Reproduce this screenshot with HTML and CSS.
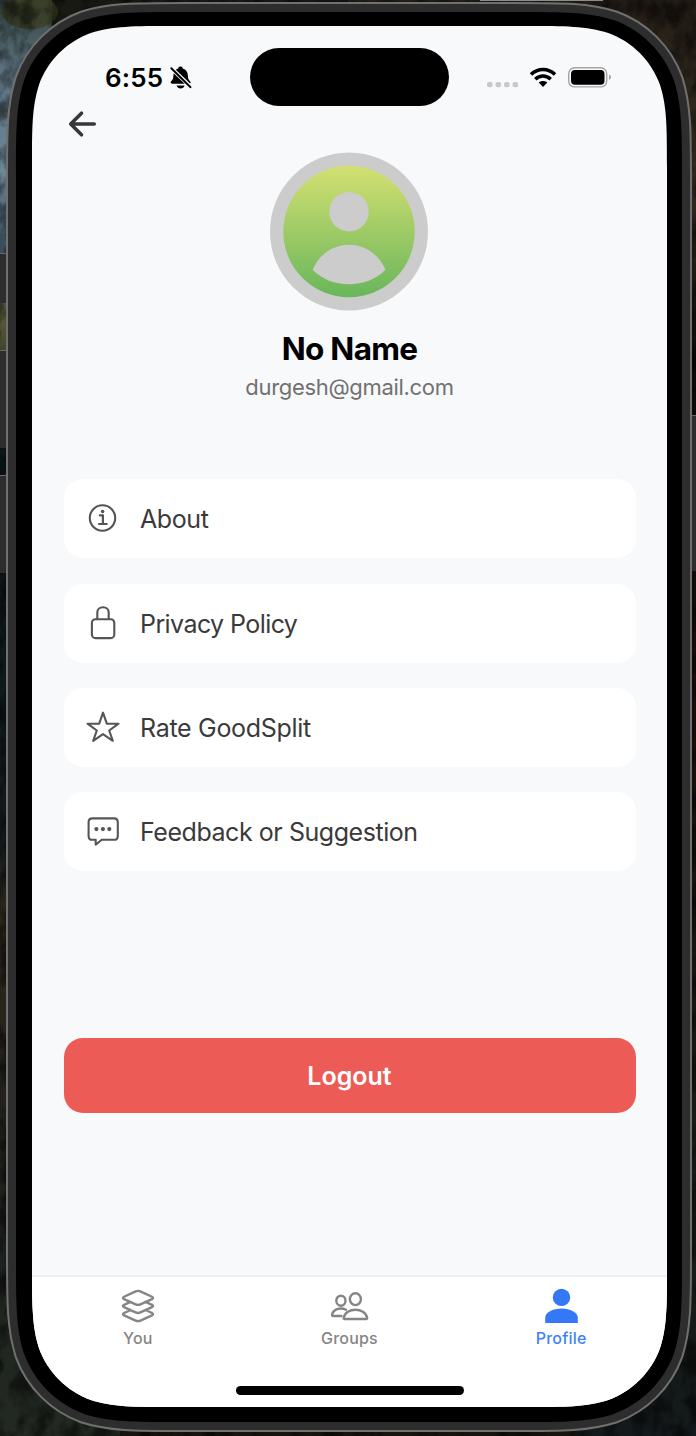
FILE: index.html
```html
<!DOCTYPE html>
<html lang="en">
<head>
<meta charset="utf-8">
<title>Profile</title>
<link rel="stylesheet" href="styles.css">
</head>
<body>
<svg class="device" viewBox="0 0 696 1436" aria-hidden="true">
  <defs>
    <linearGradient id="left" x1="0" y1="0" x2="0" y2="1">
      <stop offset="0" stop-color="#34443f"/><stop offset=".05" stop-color="#5c7280"/><stop offset=".12" stop-color="#6d8797"/><stop offset=".17" stop-color="#3f5361"/><stop offset=".22" stop-color="#5a5a39"/><stop offset=".3" stop-color="#0c1718"/><stop offset=".58" stop-color="#11191c"/><stop offset=".64" stop-color="#2d281e"/><stop offset=".75" stop-color="#25221b"/><stop offset=".86" stop-color="#1d211e"/><stop offset="1" stop-color="#232a22"/>
    </linearGradient>
    <linearGradient id="right" x1="0" y1="0" x2="0" y2="1">
      <stop offset="0" stop-color="#251e18"/><stop offset=".12" stop-color="#352d20"/><stop offset=".25" stop-color="#0c0b09"/><stop offset=".5" stop-color="#170e09"/><stop offset=".85" stop-color="#181d17"/><stop offset="1" stop-color="#14191b"/>
    </linearGradient>
    <filter id="grain" x="0" y="0" width="100%" height="100%">
      <feTurbulence type="fractalNoise" baseFrequency=".06 .04" numOctaves="4" seed="8"/>
      <feColorMatrix values="0 0 0 0 0  0 0 0 0 0  0 0 0 0 0  3 0 0 0 -1.2"/>
    </filter>
  </defs>
  <rect width="348" height="1436" fill="url(#left)"/>
  <rect x="348" width="348" height="1436" fill="url(#right)"/>
  <rect x="52" width="296" height="60" fill="#181913"/>
  <ellipse cx="30" cy="12" rx="28" ry="17" fill="#3b3d20" opacity=".75"/>
  <rect y="1428" x="120" width="456" height="8" fill="#17140f"/>
  <rect width="696" height="1436" filter="url(#grain)" opacity=".5"/>
  <rect x="480" y="0" width="123" height="1" fill="#8b8b88"/>
  <path fill="#2d2d2d" d="M0 253h8v50H0zM0 350h8v98H0zM0 475h8v98H0zM690 415h6v156h-6z"/>
  <path stroke="#6a6a6a" d="M0 253.5h7M0 350.5h7M0 475.5h7M691 415.500h5"/>
  <path fill="#2d2d2d" stroke="#707070" stroke-width="2" d="M185.9 3H512.1c51.5 0 77.300 0 105 8.800c30.300 11 54.100 34.800 65.100 65.100c8.800 27.700 8.800 53.500 8.800 105V1252.100c0 51.500 0 77.300-8.800 105c-11 30.300-34.800 54.100-65.100 65.100c-27.700 8.800-53.500 8.800-105 8.800H185.900c-51.500 0-77.300 0-105-8.800c-30.300-11-54.100-34.800-65.100-65.100c-8.800-27.700-8.800-53.500-8.800-105V181.900c0-51.500 0-77.300 8.800-105c11-30.300 34.800-54.100 65.100-65.100c27.700-8.800 53.500-8.800 105-8.800z"/>
  <path d="M181.100 12H516.900c47.500 0 71.300 0 96.900 8.100c27.900 10.200 49.900 32.200 60.100 60.100c8.100 25.600 8.100 49.400 8.100 96.900V1256.900c0 47.500 0 71.300-8.100 96.900c-10.200 27.900-32.200 49.900-60.100 60.100c-25.600 8.100-49.400 8.100-96.900 8.100H181.100c-47.500 0-71.300 0-96.900-8.100c-27.900-10.200-49.900-32.200-60.100-60.100c-8.100-25.600-8.100-49.400-8.100-96.900V177.100c0-47.500 0-71.300 8.100-96.900c10.200-27.900 32.200-49.900 60.100-60.100c25.600-8.100 49.400-8.100 96.900-8.100z"/>
</svg>

<div class="screen">
  <header class="status">
    <div class="status-left">
      <span class="time">6:55</span>
      <svg class="bell" width="22" height="24" viewBox="170 66 22 24">
        <path d="M172.300 83.800c-2.200-.3-2-1.700-.9-2.700c2.200-1.900 1.800-4.100 2.200-7.100c.5-3.200 2.300-5 4.600-5.600c.4-2.400 4.200-2.400 4.600 0c3.200.8 4.900 3.300 5.100 7c.1 3 .6 4.200 2.200 5.900c1.100 1.200.6 2.500-1 2.500zM176.600 85.500h8c-.8 4-7.200 4-8 0z"/>
        <path stroke="#f8f9fb" stroke-width="4" d="m170.500 67.500 21 20"/>
        <path stroke="#000" stroke-width="1.900" stroke-linecap="round" d="m171.300 68.200 19.200 19"/>
      </svg>
    </div>
    <div class="island"></div>
    <svg class="signals" width="126" height="24" viewBox="486 65 126 24">
      <g fill="#c8c9cb"><rect x="487" y="82" width="5.600" height="5.300" rx="2"/><rect x="495.500" y="82" width="5.600" height="5.300" rx="2"/><rect x="504" y="82" width="5.600" height="5.300" rx="2"/><rect x="512.500" y="82" width="5.600" height="5.300" rx="2"/></g>
      <g fill="none" stroke="#000" stroke-width="3.600"><path d="M531 74.500c6.800-6.700 17.200-6.700 24 0"/><path d="M535.300 79.200c4.500-4.300 10.900-4.300 15.400 0"/></g>
      <path d="m543 87-4.300-4.400c2.500-2 6.100-2 8.600 0z"/>
      <rect x="568.700" y="67.700" width="38" height="19.200" rx="6" fill="none" stroke="#a4a5a7" stroke-width="1.400"/>
      <rect x="571" y="70" width="33.500" height="14.700" rx="4"/><path fill="#a4a5a7" d="M609 74.500q2 .8 2 2.700t-2 2.700z"/>
    </svg>
  </header>

  <main class="content">
    <svg class="back" width="30" height="28" viewBox="68 110 30 28"><path d="M81.500 113.200 70.700 124l10.800 10.800M71.500 124h22.800"/></svg>
    <section class="identity">
      <svg class="avatar" width="159" height="159" viewBox="0 -.5 159 159">
        <defs><linearGradient id="lime" x1="0" y1="0" x2="0" y2="1"><stop stop-color="#d4e071"/><stop offset="1" stop-color="#69b65b"/></linearGradient></defs>
        <circle cx="79" cy="79" r="79" fill="#ccc"/><circle cx="79" cy="79" r="65.700" fill="url(#lime)"/>
        <circle cx="79" cy="59.300" r="19.700" fill="#ccc"/><path fill="#ccc" d="M42.700 117.300C49 102 63 92.200 79 92.200s30 9.800 36.500 25.100C106 127 93 131.800 79 131.800s-27-4.800-36.300-14.500z"/>
      </svg>
      <h1>No Name</h1>
      <p>durgesh@gmail.com</p>
    </section>
    <nav class="menu">
      <a class="item about"><svg viewBox="86 502 34 34"><circle cx="102.500" cy="518" r="12.700"/><path stroke-width="2.200" d="M99.900 515.300h3v8.400M99 524h7.700"/><circle cx="102.600" cy="511.500" r="1.800" class="dot"/></svg><span>About</span></a>
      <a class="item privacy"><svg viewBox="86 607 34 34"><path d="M97.300 620v-6.300c0-7.200 11.400-7.200 11.400 0v6.300"/><rect x="91.900" y="620.200" width="22.400" height="18.900" rx="3.600"/></svg><span>Privacy Policy</span></a>
      <a class="item rate"><svg viewBox="86 711 34 34"><path d="m103 713.700 3.800 11h11.700l-9.300 6.800 3.600 10.300-9.800-6.700-9.800 6.700 3.600-10.300-9.300-6.800h11.700z"/></svg><span>Rate GoodSplit</span></a>
      <a class="item feedback"><svg viewBox="86 815 34 34"><path d="M92.300 818.400h21.600q3.900 0 3.900 3.900v13.600q0 3.900-3.900 3.900h-12.200l-6 4.900v-4.900h-3.400q-3.700 0-3.700-3.900v-13.600q0-3.900 3.700-3.900z"/><g class="dot"><circle cx="96.400" cy="829.100" r="2.100"/><circle cx="102.900" cy="829.100" r="2.100"/><circle cx="109.300" cy="829.100" r="2.100"/></g></svg><span>Feedback or Suggestion</span></a>
    </nav>
    <button class="logout"><span>Logout</span></button>
  </main>

  <footer class="tabs">
    <a class="tab"><svg width="40" height="40" viewBox="0 0 512 512"><g fill="none" stroke="#858585" stroke-width="31" stroke-linecap="round" stroke-linejoin="round"><path d="M434.800 137.650l-149.360-68.100c-16.190-7.400-42.690-7.400-58.880 0L77.300 137.650c-17.600 8-17.600 21.090 0 29.090l148 67.500c16.890 7.700 44.690 7.700 61.580 0l148-67.500c17.520-8 17.520-21.100-.08-29.090z"/><path d="M160 308.520l-82.700 37.110c-17.600 8-17.600 21.100 0 29.100l148 67.500c16.890 7.690 44.690 7.690 61.580 0l148-67.500c17.600-8 17.600-21.100 0-29.100l-79.940-38.470M160 204.480l-82.800 37.160c-17.600 8-17.600 21.100 0 29.100l148 67.490c16.890 7.700 44.690 7.700 61.580 0l148-67.490c17.700-8 17.700-21.100.1-29.100L352 204.480"/></g></svg><span>You</span></a>
    <a class="tab"><svg width="40" height="40" viewBox="329.500 1286 40 40"><g fill="none" stroke="#858585" stroke-width="2.400" stroke-linejoin="round" stroke-linecap="round"><ellipse cx="341.400" cy="1300.700" rx="4.600" ry="5"/><ellipse cx="355.900" cy="1299.200" rx="5.500" ry="5.900"/><path d="M346.500 1309.800c-5.800-3.100-13-.1-13.900 5q-.2 1.200 1 1.200h8.200M345 1319q-1 0-.8-1.200c2-10.700 21.400-10.700 23.400 0q.2 1.200-.8 1.200z"/></g></svg><span>Groups</span></a>
    <a class="tab active"><svg width="40" height="40" viewBox="541 1286 40 40"><g fill="#3478f6"><circle cx="561.500" cy="1297.400" r="8.700"/><path d="M545.200 1323v-5.500c0-4.800 7.500-8.900 16.300-8.900s16.300 4.100 16.300 8.900v5.500z"/></g></svg><span>Profile</span></a>
  </footer>
  <div class="home"></div>
</div>
</body>
</html>
```
FILE: styles.css
```css
* { box-sizing: border-box; }
body { margin: 0; width: 696px; height: 1436px; position: relative; overflow: hidden; background: #15191a; font-family: Inter, "Liberation Sans", sans-serif; }
svg { display: block; flex: none; }
.device { position: absolute; inset: 0; width: 696px; height: 1436px; }
.screen {
  position: relative; width: 635px; height: 1381px; margin: 26px 0 0 32px; display: flex; flex-direction: column; background: #f8f9fb; float: left;
  clip-path: path("M142.2 0H492.8c41 0 61.4 0 83.5 7c24 8.7 43 27.7 51.7 51.7c7 22.1 7 42.5 7 83.5V1238.8c0 41 0 61.4-7 83.5c-8.7 24-27.7 43-51.7 51.7c-22.1 7-42.5 7-83.5 7H142.2c-41 0-61.4 0-83.5-7c-24-8.7-43-27.7-51.7-51.7c-7-22.1-7-42.5-7-83.5V142.2c0-41 0-61.4 7-83.5c8.700-24 27.7-43 51.7-51.7c22.1-7 42.5-7 83.5-7z");
}
.status { height: 80px; padding: 22px 55px 0 73px; display: flex; align-items: flex-start; }
.status-left { width: 145px; display: flex; padding-top: 18px; }
.time { width: 65px; font-size: 26px; line-height: 24px; font-weight: 600; letter-spacing: .2px; white-space: nowrap; }
.island { width: 199px; height: 58px; border-radius: 29px; background: #000; }
.signals { margin: 17px 0 0 37px; }
.content { flex: 1; display: flex; flex-direction: column; padding: 0 31.5px; }
.back { margin: 4px 0 0 4.5px; fill: none; stroke: #373737; stroke-width: 3.5; stroke-linecap: round; stroke-linejoin: round; }
.identity { display: flex; flex-direction: column; align-items: center; margin-top: 14px; }
h1 { margin: 19px 0 0; font-size: 31.5px; line-height: 38px; font-weight: 700; letter-spacing: -.7px; color: #000; }
p { margin: 5px 0 0; font-size: 22px; line-height: 28px; letter-spacing: -.32px; color: #717171; }
.menu { display: grid; gap: 25.3px; margin-top: 78.4px; }
.item { height: 79px; display: flex; align-items: center; background: #fff; border-radius: 19px; padding-left: 22.5px; font-size: 25px; color: #3a3a3a; }
.item svg { width: 34px; height: 34px; margin-right: 20px; fill: none; stroke: #555; stroke-width: 2.1; stroke-linejoin: round; stroke-linecap: round; }
.item .dot { fill: #555; stroke: none; }
.item span { line-height: 32px; white-space: nowrap; padding-top: 1px; }
.about { letter-spacing: -.4px; }
.privacy { letter-spacing: -.58px; }
.rate { letter-spacing: -.3px; }
.feedback { letter-spacing: -.45px; }
.logout { margin: 166.6px 0 0; height: 75px; border: 0; border-radius: 19px; background: #ec5b55; color: #fff; font: 600 25px/32px Inter, sans-serif; padding: 2px 0 0; }
.tabs { height: 132px; display: grid; grid-template-columns: repeat(3, 1fr); border-top: 2px solid #eeeff1; background: #fff; }
.tab { display: flex; flex-direction: column; align-items: center; padding-top: 9px; color: #858585; font-size: 16px; font-weight: 500; line-height: 20px; letter-spacing: .2px; }
.tab span { margin-top: 2px; }
.tab.active { color: #3e82f7; }
.home { position: absolute; left: 203.500px; top: 1360px; width: 228px; height: 8.500px; border-radius: 5px; background: #000; }
```
